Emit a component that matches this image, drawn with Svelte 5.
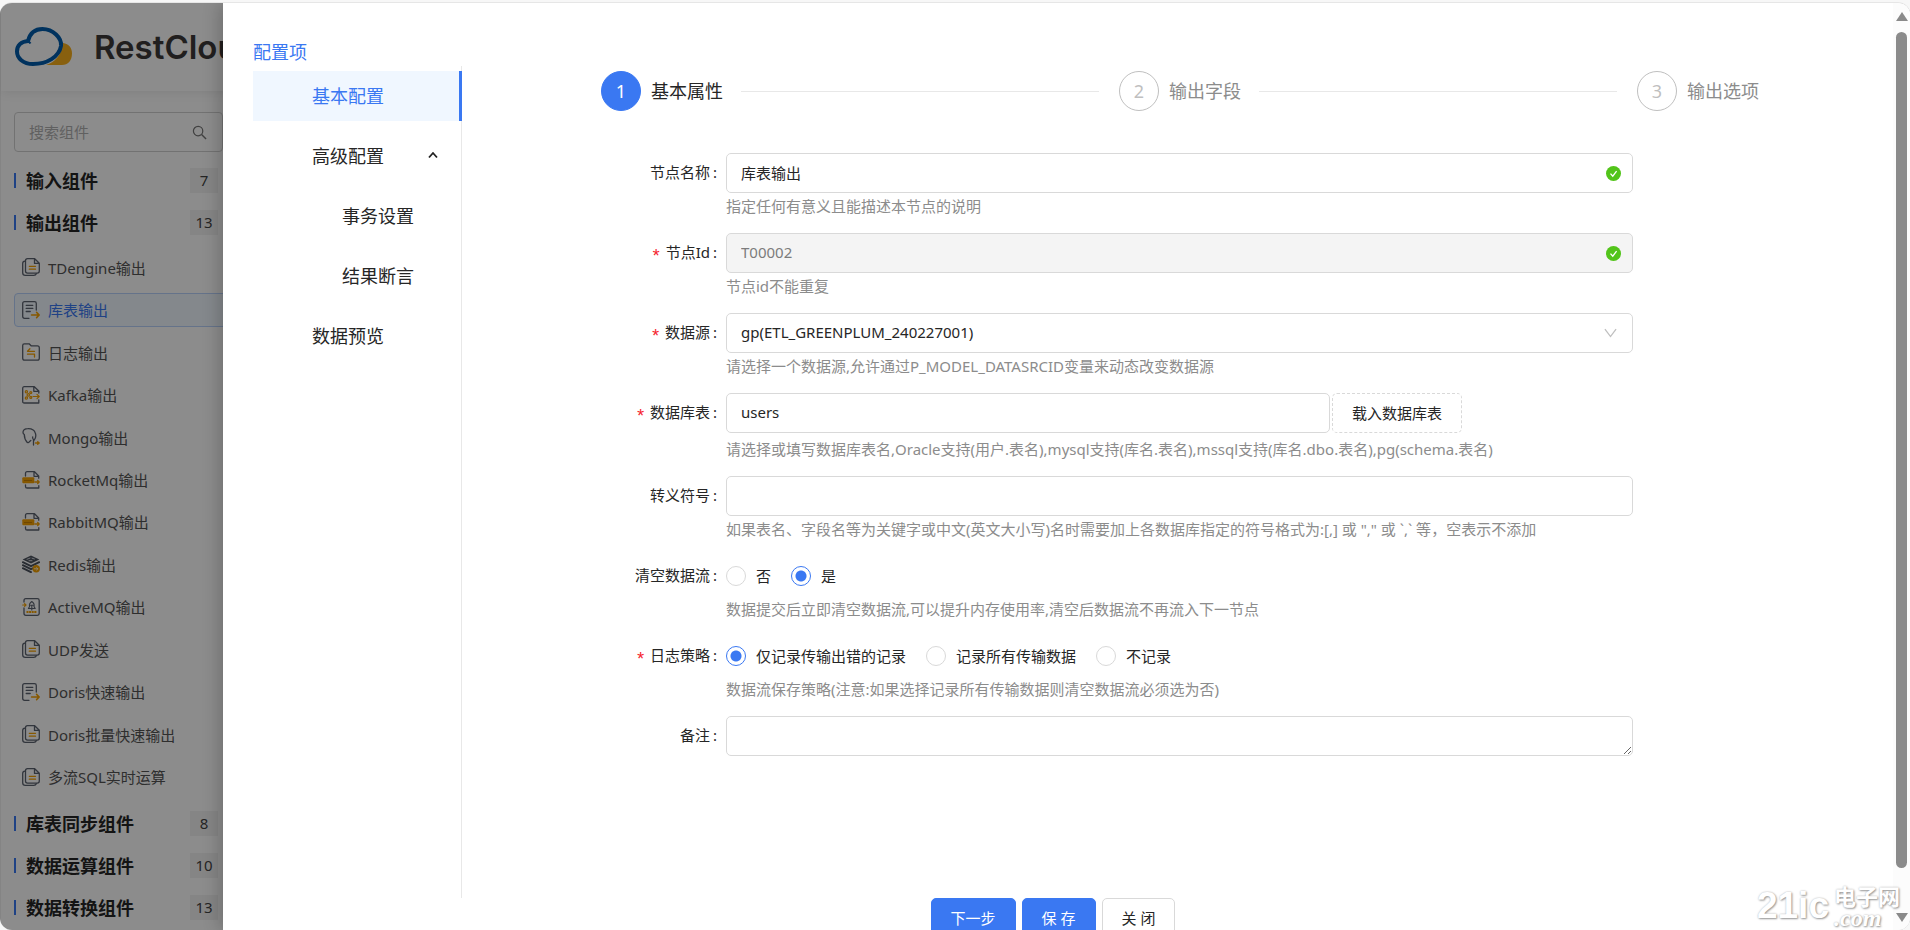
<script lang="ts">
	type IconName = 'copy' | 'table' | 'folder' | 'kafka' | 'mongo' | 'mq' | 'redis' | 'active';

	interface Component {
		name: string;
		icon: IconName;
	}

	interface Group {
		title: string;
		count: number;
		items?: Component[];
	}

	const groups: Group[] = [
		{ title: '输入组件', count: 7 },
		{
			title: '输出组件',
			count: 13,
			items: [
				{ name: 'TDengine输出', icon: 'copy' },
				{ name: '库表输出', icon: 'table' },
				{ name: '日志输出', icon: 'folder' },
				{ name: 'Kafka输出', icon: 'kafka' },
				{ name: 'Mongo输出', icon: 'mongo' },
				{ name: 'RocketMq输出', icon: 'mq' },
				{ name: 'RabbitMQ输出', icon: 'mq' },
				{ name: 'Redis输出', icon: 'redis' },
				{ name: 'ActiveMQ输出', icon: 'active' },
				{ name: 'UDP发送', icon: 'copy' },
				{ name: 'Doris快速输出', icon: 'table' },
				{ name: 'Doris批量快速输出', icon: 'copy' },
				{ name: '多流SQL实时运算', icon: 'copy' }
			]
		},
		{ title: '库表同步组件', count: 8 },
		{ title: '数据运算组件', count: 10 },
		{ title: '数据转换组件', count: 13 }
	];

	const steps = ['基本属性', '输出字段', '输出选项'];
	const logOptions = ['仅记录传输出错的记录', '记录所有传输数据', '不记录'];

	let selected = $state('库表输出');
	let activeMenu = $state('基本配置');
	let advancedOpen = $state(true);
	let currentStep = $state(0);

	let nodeName = $state('库表输出');
	let nodeId = $state('T00002');
	let dataSource = $state('gp(ETL_GREENPLUM_240227001)');
	let tableName = $state('users');
	let escapeChar = $state('');
	let clearFlow = $state('是');
	let logPolicy = $state('仅记录传输出错的记录');
	let remark = $state('');
</script>

{#snippet icon(name: IconName)}
	<svg class="item-icon" viewBox="0 0 18 18" fill="none" stroke="#5c6370" stroke-width="1.3" stroke-linecap="round" stroke-linejoin="round" aria-hidden="true">
		{#if name === 'copy'}
			<path d="M3 3.2Q.7 3.4.7 5.5v9.2q0 2.6 2.6 2.6h8.5q2 0 2.5-1.6" />
			<path d="M5.5.7h7.2l4.6 4.5v7.9q0 2-2 2H5.5q-2 0-2-2V2.7q0-2 2-2zM12.5.9v4.5h4.6" />
			<path stroke="#f5a000" d="M7.3 8.3h6.2M7.3 11.2h6.2" />
		{:else if name === 'table'}
			<path d="M7 17.3H2.5q-1.8 0-1.8-1.8v-13Q.7.7 2.5.7h10q1.8 0 1.8 1.8V9M4.2 4.3h6.6M4.2 7.4h6.6M4.2 10.5h4" />
			<path stroke="#f5a000" stroke-width="1.5" d="M9.5 14h7.6M14.6 11.4l2.6 2.6-2.6 2.6" />
		{:else if name === 'folder'}
			<path d="M2.3.8h4.8l2 2h6.3q1.9 0 1.9 1.9v10.6q0 1.9-1.9 1.9H2.6q-1.9 0-1.9-1.9V2.4Q.7.8 2.3.8z" />
			<path stroke="#f5a000" d="M12.5 8.3h-7l2.4-2.5M5.5 11.2h7V14" />
		{:else if name === 'kafka'}
			<path d="M16.8 14v3H2.3Q.7 17 .7 15.4V2.3Q.7.7 2.3.7h10L16.8 5v2M11.8 1v4.3h4.6" />
			<g stroke="#f5a000" stroke-width="1.2">
				<circle cx="4.4" cy="5.8" r="1.1" />
				<circle cx="4.4" cy="12" r="1.1" />
				<circle cx="6.3" cy="8.9" r="1.2" />
				<circle cx="8.8" cy="6.6" r="1" />
				<circle cx="8.8" cy="11.4" r="1" />
				<path d="M11 10.5h6M15 8.4l2.2 2.1-2.2 2.1" />
			</g>
		{:else if name === 'mongo'}
			<path d="M1 4Q1.5.8 5.8.7q5.8-.3 7.4 4.1 1.6 4-1 7.2-2-1-1.5-3M1 4q-.1 1.8 1.3 2.5 0 4.8 3 8 1.3.6 2-.7l1.5-1.3M11.5 12v5" />
			<path stroke="#f5a000" d="M13.5 15h3.5M15.7 13.7 17.2 15l-1.5 1.3" />
		{:else if name === 'mq'}
			<path d="M3.5 5V2.3Q3.5.7 5.1.7h7.4L16.7 5v2.2M12 1v4.3h4.5M3.5 13.8v1.6q0 1.6 1.6 1.6h11.7v-2.3" />
			<rect x=".3" y="6.3" width="12" height="6" rx="1" fill="#f5a000" stroke="none" />
			<path stroke="#f5a000" d="M12.8 11h4.4M15.7 9.5l1.5 1.5-1.5 1.5" />
			<path stroke="#b87400" stroke-width=".8" stroke-dasharray="1 1" d="M2.5 9.5h8" />
		{:else if name === 'redis'}
			<path d="m.6 4.4 8.4-4 8.4 4-8.4 4z" fill="#4c525d" stroke="none" />
			<path d="m5 4.3 3-1.2M10 3.2l2.4.8M7 5.7h3" stroke="#dfe2e8" stroke-width=".9" />
			<path d="m.8 7.2 8.2 4 8.2-4M.8 10.2l8.2 4 3-1.4M.8 13.2l8.2 4" stroke-width="1.9" stroke="#4c525d" />
			<circle cx="14.2" cy="13.8" r="3.7" fill="#f5a000" stroke="none" />
			<path stroke="#fff3d6" stroke-width=".9" d="M12.3 13.8h3.5M14.6 12.6l1.3 1.2-1.3 1.2" />
		{:else}
			<path d="M2 4V2.5Q2 .7 3.8.7h11.6q1.8 0 1.8 1.8v13q0 1.8-1.8 1.8H3.8Q2 17.3 2 15.5V10" />
			<path d="M9.8 3.5q-3 2-2.2 5l-1.2 2h6.8l-1.2-2q.8-3-2.2-5zM8.6 7.2h2.4M9.8 8v4" stroke-width="1.1" />
			<path stroke="#f5a000" stroke-width="1.2" d="M.7 7h3M2.6 5.6 4 7 2.6 8.4" />
			<path stroke="#f5a000" stroke-width="1.8" stroke-dasharray="2 .6" stroke-linecap="butt" d="M4.5 14h10.5" />
		{/if}
	</svg>
{/snippet}

{#snippet check()}
	<svg class="check" viewBox="0 0 16 16" aria-hidden="true">
		<circle cx="8" cy="8" r="8" fill="#52c41a" />
		<path d="m4.8 8.2 2.4 2.7 4.1-5.4" fill="none" stroke="#fff" stroke-width="1.4" />
	</svg>
{/snippet}

<div class="window">
	<aside class="sidebar">
		<header class="brand">
			<svg class="logo" viewBox="0 0 58 40" aria-hidden="true">
				<path d="M48 16c6 1 9 5 9 10.500 0 7-4 11.500-10 11.500H31c9-3 15-9 17-22z" fill="#f8b01c" />
				<path d="M18 37C8 37 2 31 2 24.500c0-6 4-10 11-10.500C15 6 20 2 27.500 2 38 2 47 11 46 19c-2 11-14 18-28 18z" fill="#fff" stroke="#005cab" stroke-width="4" />
				<path d="M13 14.500c1 .5 2 1 2.500 2" fill="none" stroke="#005cab" stroke-width="2" />
			</svg>
			<span class="brand-name">RestCloud</span>
		</header>

		<div class="search">
			<input type="text" placeholder="搜索组件" aria-label="搜索组件" />
			<svg viewBox="0 0 16 16" aria-hidden="true">
				<circle cx="6.500" cy="6.500" r="5" fill="none" stroke="#777" stroke-width="1.300" />
				<path d="m10.200 10.200 4.800 4.800" stroke="#777" stroke-width="1.500" />
			</svg>
		</div>

		<nav class="groups">
			{#each groups as group}
				<div class="group">
					<span class="group-bar"></span>
					<span class="group-title">{group.title}</span>
					<span class="count">{group.count}</span>
				</div>
				{#if group.items}
					<ul class="items">
						{#each group.items as item}
							<li>
								<button class="item" class:selected={item.name === selected} onclick={() => (selected = item.name)}>
									{@render icon(item.icon)}
									<span>{item.name}</span>
								</button>
							</li>
						{/each}
					</ul>
				{/if}
			{/each}
		</nav>
	</aside>

	<div class="mask"></div>

	<section class="drawer">
		<div class="drawer-body">
			<h2 class="drawer-title">配置项</h2>

			<div class="columns">
				<nav class="menu">
					<button class:active={activeMenu === '基本配置'} onclick={() => (activeMenu = '基本配置')}>基本配置</button>
					<button aria-expanded={advancedOpen} onclick={() => (advancedOpen = !advancedOpen)}>
						高级配置
						<svg class="caret" viewBox="0 0 10 8" aria-hidden="true">
							<path d="m1 6.500 4-4.500 4 4.500" fill="none" stroke="#222" stroke-width="1.800" />
						</svg>
					</button>
					{#if advancedOpen}
						<button class="sub" class:active={activeMenu === '事务设置'} onclick={() => (activeMenu = '事务设置')}>事务设置</button>
						<button class="sub" class:active={activeMenu === '结果断言'} onclick={() => (activeMenu = '结果断言')}>结果断言</button>
					{/if}
					<button class:active={activeMenu === '数据预览'} onclick={() => (activeMenu = '数据预览')}>数据预览</button>
				</nav>

				<div class="content">
					<ol class="steps">
						{#each steps as step, i}
							<li class="step" class:current={i === currentStep}>
								<span class="step-no">{i + 1}</span>
								<span class="step-title">{step}</span>
							</li>
						{/each}
					</ol>

					<form class="form" onsubmit={(e) => e.preventDefault()}>
						<label class="label" for="node-name">节点名称<i>:</i></label>
						<div class="field">
							<div class="control">
								<input id="node-name" class="box" type="text" bind:value={nodeName} />
								{@render check()}
							</div>
							<p class="help">指定任何有意义且能描述本节点的说明</p>
						</div>

						<label class="label" for="node-id"><b>*</b>节点Id<i>:</i></label>
						<div class="field">
							<div class="control">
								<input id="node-id" class="box" type="text" disabled bind:value={nodeId} />
								{@render check()}
							</div>
							<p class="help">节点id不能重复</p>
						</div>

						<label class="label" for="data-source"><b>*</b>数据源<i>:</i></label>
						<div class="field">
							<div class="control">
								<select id="data-source" class="box" bind:value={dataSource}>
									<option>gp(ETL_GREENPLUM_240227001)</option>
								</select>
								<svg class="arrow" viewBox="0 0 14 10" aria-hidden="true">
									<path d="m1 .8 6 8 6-8" fill="none" stroke="#bfbfbf" stroke-width="1.400" />
								</svg>
							</div>
							<p class="help">请选择一个数据源,允许通过P_MODEL_DATASRCID变量来动态改变数据源</p>
						</div>

						<label class="label" for="table-name"><b>*</b>数据库表<i>:</i></label>
						<div class="field">
							<div class="control with-button">
								<input id="table-name" class="box" type="text" bind:value={tableName} />
								<button type="button" class="btn dashed">载入数据库表</button>
							</div>
							<p class="help">请选择或填写数据库表名,Oracle支持(用户.表名),mysql支持(库名.表名),mssql支持(库名.dbo.表名),pg(schema.表名)</p>
						</div>

						<label class="label" for="escape-char">转义符号<i>:</i></label>
						<div class="field">
							<div class="control">
								<input id="escape-char" class="box" type="text" bind:value={escapeChar} />
							</div>
							<p class="help">如果表名、字段名等为关键字或中文(英文大小写)名时需要加上各数据库指定的符号格式为:[,] 或 "," 或 `,` 等，空表示不添加</p>
						</div>

						<span class="label" id="clear-flow">清空数据流<i>:</i></span>
						<div class="field">
							<div class="control radios" role="radiogroup" aria-labelledby="clear-flow">
								{#each ['否', '是'] as option}
									<label><input type="radio" name="clear-flow" value={option} bind:group={clearFlow} /><span>{option}</span></label>
								{/each}
							</div>
							<p class="help">数据提交后立即清空数据流,可以提升内存使用率,清空后数据流不再流入下一节点</p>
						</div>

						<span class="label" id="log-policy"><b>*</b>日志策略<i>:</i></span>
						<div class="field">
							<div class="control radios" role="radiogroup" aria-labelledby="log-policy">
								{#each logOptions as option}
									<label><input type="radio" name="log-policy" value={option} bind:group={logPolicy} /><span>{option}</span></label>
								{/each}
							</div>
							<p class="help">数据流保存策略(注意:如果选择记录所有传输数据则清空数据流必须选为否)</p>
						</div>

						<label class="label" for="remark">备注<i>:</i></label>
						<div class="field">
							<div class="control">
								<textarea id="remark" class="box" rows="1" bind:value={remark}></textarea>
							</div>
						</div>
					</form>
				</div>
			</div>

			<footer class="actions">
				<button class="btn primary" onclick={() => (currentStep = Math.min(currentStep + 1, 2))}>下一步</button>
				<button class="btn primary">保 存</button>
				<button class="btn">关 闭</button>
			</footer>
		</div>

		<div class="scrollbar" aria-hidden="true">
			<svg viewBox="0 0 12 9"><path d="M6 0 12 9H0z" fill="#8a8a8a" /></svg>
			<span class="thumb"></span>
			<svg viewBox="0 0 12 9"><path d="M0 0h12L6 9z" fill="#8a8a8a" /></svg>
		</div>
	</section>

	<div class="watermark">
		<span class="wm-main">21ic</span>
		<span class="wm-side">
			<span class="wm-cn">电子网</span>
			<span class="wm-com">.com</span>
		</span>
	</div>
</div>

<style>
	:global(body) {
		background: #f7f7f7;
		overflow: hidden;
	}

	.window,
	.window :is(button, input, select, textarea) {
		font-family: 'Noto Sans', 'Noto Sans CJK SC', sans-serif;
		font-size: 15px;
	}

	.window {
		position: relative;
		box-sizing: border-box;
		height: calc(100vh - 2px);
		margin-top: 2px;
		border-top: 1px solid #e6e6e6;
		border-radius: 12px;
		background: #fff;
		color: #262626;
		overflow: hidden;
	}

	.window * {
		box-sizing: border-box;
	}

	button {
		cursor: pointer;
	}

	/* component library */
	.sidebar {
		width: 232px;
		border-left: 1px solid #f0f0f0;
	}

	.brand {
		display: flex;
		align-items: center;
		gap: 21px;
		height: 88px;
		padding-left: 14px;
		box-shadow: 0 2px 10px rgba(0, 0, 0, 0.08);
	}

	.logo {
		flex: none;
		width: 58px;
		height: 40px;
	}

	.brand-name {
		font-family: Inter, sans-serif;
		font-size: 33px;
		font-weight: 600;
		line-height: 40px;
		color: #3c3a3a;
	}

	.search {
		display: flex;
		align-items: center;
		height: 40px;
		margin: 21px 9px 7px 13px;
		padding: 0 15px 0 14px;
		border: 1px solid #d0d0d0;
		border-radius: 4px;
	}

	.search input {
		flex: 1;
		min-width: 0;
		padding: 0;
		border: 0;
		outline: 0;
		background: none;
	}

	.search input::placeholder {
		color: #b0b0b0;
	}

	.search svg {
		width: 15px;
		height: 15px;
	}

	.groups {
		padding: 0 14px 0 13px;
	}

	.group {
		display: flex;
		align-items: center;
		height: 42px;
	}

	.group-bar {
		width: 2px;
		height: 15px;
		background: #3a78f2;
	}

	.group-title {
		flex: 1;
		padding-left: 10px;
		font-size: 18px;
		font-weight: 700;
	}

	.count {
		width: 28px;
		background: #f3f3f3;
		font-size: 15px;
		line-height: 25px;
		text-align: center;
		color: #444;
	}

	.items {
		display: grid;
		grid-auto-rows: 1fr;
		align-items: center;
		height: 552px;
		margin: 3px -14px 4px 0;
		padding: 0;
		list-style: none;
	}

	.item {
		display: flex;
		align-items: center;
		gap: 8px;
		width: 100%;
		height: 34px;
		padding: 0 7px;
		border: 1px solid transparent;
		border-radius: 4px;
		background: none;
		color: #555;
		white-space: nowrap;
	}

	.item.selected {
		border-color: #b8d2fb;
		background: #f0f7ff;
		color: #3a78f2;
	}

	.item-icon {
		flex: none;
		width: 18px;
		height: 18px;
	}

	.mask {
		position: absolute;
		inset: 0;
		background: rgba(0, 0, 0, 0.45);
	}

	/* config drawer */
	.drawer {
		position: absolute;
		inset: 0 0 0 223px;
		display: flex;
		background: #fff;
		box-shadow: -4px 0 16px rgba(0, 0, 0, 0.2);
	}

	.drawer-body {
		flex: 1;
		min-width: 0;
		padding: 36px 0 0 30px;
	}

	.drawer-title {
		margin: 0;
		font-size: 18px;
		font-weight: 400;
		line-height: 27px;
		color: #3a78f2;
	}

	.columns {
		display: flex;
		min-height: 832px;
	}

	.menu {
		display: flex;
		flex-direction: column;
		gap: 10px;
		width: 209px;
		padding-top: 5px;
		border-right: 1px solid #e8e8e8;
	}

	.menu button {
		display: flex;
		align-items: center;
		justify-content: space-between;
		flex: none;
		height: 50px;
		margin-right: -1px;
		padding: 0 24px 2px 59px;
		border: 0;
		background: none;
		font-size: 18px;
		color: #262626;
	}

	.menu button.sub {
		padding-left: 89px;
	}

	.menu button.active {
		border-right: 3px solid #3a78f2;
		background: #f0f7ff;
		color: #3a78f2;
	}

	.caret {
		width: 10px;
		height: 8px;
	}

	.content {
		flex: 1;
		min-width: 0;
		padding-top: 5px;
	}

	.steps {
		display: flex;
		gap: 20px;
		margin: 0 134px 42px 139px;
		padding: 0;
		list-style: none;
	}

	.step {
		display: flex;
		align-items: center;
		flex: 1;
		color: #8c8c8c;
	}

	.step:last-child {
		flex: none;
	}

	.step:not(:last-child)::after {
		content: '';
		flex: 1;
		height: 1px;
		margin-left: 18px;
		background: #e8e8e8;
	}

	.step-no {
		width: 40px;
		height: 40px;
		margin-right: 10px;
		border: 1px solid #bfbfbf;
		border-radius: 50%;
		font-size: 18px;
		line-height: 38px;
		text-align: center;
		color: #bfbfbf;
	}

	.step-title {
		font-size: 18px;
		line-height: 40px;
	}

	.step.current {
		color: #262626;
	}

	.step.current .step-no {
		border-color: #3a78f2;
		background: #3a78f2;
		color: #fff;
	}

	.form {
		display: grid;
		grid-template-columns: 264px 1fr 260px;
		row-gap: 13px;
	}

	.label {
		grid-column: 1;
		padding-right: 9px;
		line-height: 38px;
		text-align: right;
	}

	.label i {
		margin-left: 3px;
		font-style: normal;
	}

	.label b {
		margin-right: 4px;
		font-family: 'Liberation Mono', monospace;
		font-size: 18px;
		font-weight: 400;
		line-height: 18px;
		vertical-align: -4px;
		color: #f5222d;
	}

	.field {
		grid-column: 2;
		min-width: 0;
	}

	.control {
		position: relative;
		display: flex;
		align-items: center;
		height: 40px;
	}

	.box {
		width: 100%;
		height: 40px;
		padding: 0 14px 2px;
		border: 1px solid #d9d9d9;
		border-radius: 5px;
		outline: 0;
		background: #fff;
		color: #262626;
		appearance: none;
	}

	.box:disabled {
		background: #f4f4f4;
		color: #7c7c7c;
	}

	textarea.box {
		padding: 8px 14px;
		resize: vertical;
	}

	.check {
		position: absolute;
		right: 12px;
		width: 15px;
		height: 15px;
	}

	.arrow {
		position: absolute;
		right: 16px;
		width: 13px;
		height: 10px;
		pointer-events: none;
	}

	.with-button {
		gap: 2px;
		margin-bottom: 3px;
	}

	.with-button .box {
		width: 66.6%;
	}

	.help {
		margin: 0;
		line-height: 27px;
		color: #8c8c8c;
		white-space: nowrap;
	}

	.radios {
		gap: 20px;
	}

	.radios label {
		display: flex;
		align-items: center;
		gap: 10px;
	}

	.radios span {
		padding-bottom: 2px;
	}

	.radios input {
		width: 20px;
		height: 20px;
		margin: 0;
		border: 1px solid #d9d9d9;
		border-radius: 50%;
		appearance: none;
	}

	.radios input:checked {
		border-color: #3a78f2;
		background: radial-gradient(circle, #3a78f2 5px, #fff 6px);
	}

	.btn {
		height: 40px;
		padding: 0 19px 2px;
		border: 1px solid #d9d9d9;
		border-radius: 5px;
		background: #fff;
		color: #262626;
		white-space: nowrap;
	}

	.btn.dashed {
		border-style: dashed;
	}

	.btn.primary {
		border-color: #3a78f2;
		background: #3a78f2;
		color: #fff;
	}

	.actions {
		display: flex;
		justify-content: center;
		gap: 6px;
		padding-right: 40px;
	}

	.scrollbar {
		display: flex;
		flex-direction: column;
		align-items: center;
		gap: 11px;
		width: 17px;
		padding: 9px 0 8px;
		background: #fcfcfc;
	}

	.scrollbar svg {
		flex: none;
		width: 12px;
		height: 9px;
	}

	.thumb {
		flex: 1;
		width: 11px;
		margin-bottom: 34px;
		border-radius: 6px;
		background: #8b8b8b;
	}

	.watermark {
		position: absolute;
		right: 10px;
		bottom: 2px;
		display: flex;
		align-items: center;
		gap: 5px;
		color: #fff;
		text-shadow: 1px 1px 2px #999, 0 0 2px #bbb;
		pointer-events: none;
	}

	.wm-main {
		font-family: 'Liberation Sans Narrow', 'Liberation Sans', sans-serif;
		font-size: 37px;
		font-weight: 700;
		line-height: 44px;
	}

	.wm-side {
		display: flex;
		flex-direction: column;
	}

	.wm-cn {
		font-size: 22px;
		font-weight: 700;
		line-height: 24px;
	}

	.wm-com {
		font-family: 'Liberation Serif', serif;
		font-size: 24px;
		font-style: italic;
		font-weight: 700;
		line-height: 20px;
	}
</style>
